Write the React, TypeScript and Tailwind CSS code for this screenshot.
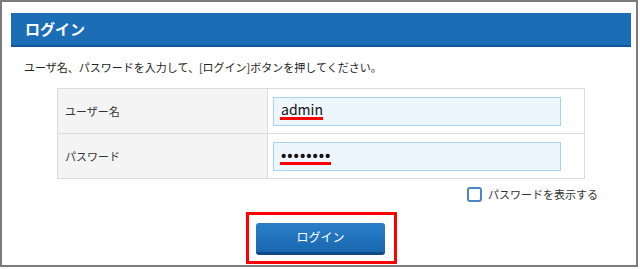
import React, { useState } from 'react';

const font = '"Noto Sans CJK JP", "Noto Sans", sans-serif';

const FieldRow: React.FC<{ label: string; value: React.ReactNode; line: number; last?: boolean }> = ({
  label,
  value,
  line,
  last,
}) => (
  <div className={`flex ${last ? 'h-[44px]' : 'h-[45px] border-b border-[#dcdcdc]'}`}>
    <div className="w-[210px] bg-[#f4f4f4] border-r border-[#dcdcdc] flex items-center pl-[7px] text-[11px] text-[#333]">
      {label}
    </div>
    <div className="flex-1 bg-white pl-[5px] pt-[8px]">
      <div className="relative w-[288px] h-[29px] bg-[#eef6fd] border border-[#a9d1f0] flex items-center pl-[7px] pb-[5px] text-[14px] text-[#111]">
        {value}
        <span className="absolute left-[6px] top-[19px] h-[3px] bg-[#ff0000]" style={{ width: line }} />
      </div>
    </div>
  </div>
);

export default function App() {
  const [show, setShow] = useState(false);

  return (
    <div className="w-[640px] h-[269px] bg-white" style={{ fontFamily: font }}>
      <div className="w-[638px] h-[267px] border-2 border-[#7b7b7b] pt-[11px] pl-[9px]">
        <div className="w-[620px] h-[34px] bg-[#1b6db6] border-b-2 border-[#0c58a2] flex items-center pl-[14px] text-white font-bold text-[15px]">
          ログイン
        </div>
        <p className="mt-[13px] pl-[13px] text-[11px] text-[#222] leading-[14px]">
          ユーザ名、パスワードを入力して、[ログイン]ボタンを押してください。
        </p>
        <div className="mt-[14px] ml-[46px] w-[528px] border border-[#dcdcdc]">
          <FieldRow label="ユーザー名" value="admin" line={43} />
          <FieldRow
            label="パスワード"
            value={
              <span className="tracking-[1px] font-bold text-[14px]">{show ? 'password' : '••••••••'}</span>
            }
            line={51}
            last
          />
        </div>
        <div className="flex justify-end pr-[38px] mt-[7px]">
          <label className="flex items-center gap-[6px] text-[11px] text-[#333] cursor-pointer">
            <span
              onClick={() => setShow(!show)}
              className="w-[15px] h-[15px] border-2 border-[#4a86c2] rounded-[3px] bg-white"
            />
            パスワードを表示する
          </label>
        </div>
        <div className="mt-[9px] ml-[235px] w-[151px] h-[52px] border-[3px] border-[#ff0000] pl-[7px] pt-[8px]">
          <button className="w-[129px] h-[32px] rounded-[3px] bg-gradient-to-b from-[#2a7fc9] to-[#1967b1] border-b-[3px] border-[#0f4a85] text-white text-[12px] flex items-center justify-center">
            ログイン
          </button>
        </div>
      </div>
    </div>
  );
}
